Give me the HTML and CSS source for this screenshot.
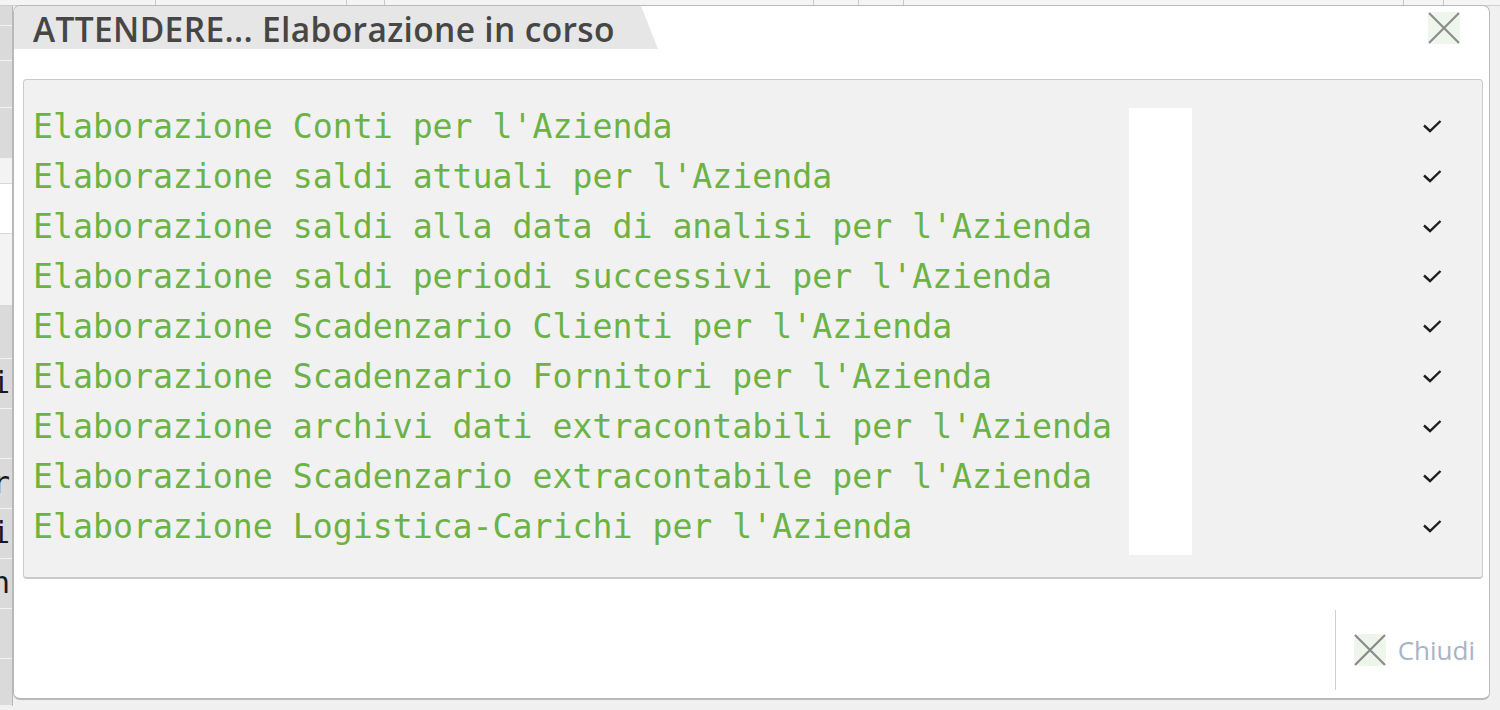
FILE: index.html
```html
<!DOCTYPE html>
<html lang="it">
<head>
<meta charset="utf-8">
<title>ATTENDERE... Elaborazione in corso</title>
<link rel="stylesheet" href="styles.css">
</head>
<body>
<div class="backdrop">
  <div class="topbar">
    <span class="tb tb1"></span><span class="tb tb2"></span><span class="tb tb3"></span><span class="tb tb4"></span><span class="tb tb5"></span><span class="tb tb6"></span><span class="tb tb7"></span><span class="tb tb8"></span>
  </div>
  <div class="leftcol">
    <div class="lr h20"></div>
    <div class="lr h35"></div>
    <div class="lr h47"></div>
    <div class="lr h51"></div>
    <div class="lr h25 light"></div>
    <div class="lr h50 white"></div>
    <div class="lr h72 light"></div>
    <div class="lr h53"></div>
    <div class="lr h50"><span>i</span></div>
    <div class="lr h50"></div>
    <div class="lr h50"><span>r</span></div>
    <div class="lr h50"><span>i</span></div>
    <div class="lr h50"><span>n</span></div>
    <div class="lr h50"></div>
    <div class="lr h47"></div>
  </div>
</div>

<div class="dialog">
  <div class="header">
    <div class="tab">ATTENDERE... Elaborazione in corso</div>
    <div class="close-top">
      <svg viewBox="0 0 32 32" width="32" height="32"><path d="M1 1 L31 31 M31 1 L1 31" stroke="#8c8c8c" stroke-width="2.2" fill="none"/></svg>
    </div>
  </div>

  <div class="panel">
    <div class="row"><span class="txt">Elaborazione Conti per l'Azienda</span><svg class="chk" viewBox="0 0 20 14"><path d="M2 6.5 L8 12 L18.5 2" /></svg></div>
    <div class="row"><span class="txt">Elaborazione saldi attuali per l'Azienda</span><svg class="chk" viewBox="0 0 20 14"><path d="M2 6.5 L8 12 L18.5 2" /></svg></div>
    <div class="row"><span class="txt">Elaborazione saldi alla data di analisi per l'Azienda</span><svg class="chk" viewBox="0 0 20 14"><path d="M2 6.5 L8 12 L18.5 2" /></svg></div>
    <div class="row"><span class="txt">Elaborazione saldi periodi successivi per l'Azienda</span><svg class="chk" viewBox="0 0 20 14"><path d="M2 6.5 L8 12 L18.5 2" /></svg></div>
    <div class="row"><span class="txt">Elaborazione Scadenzario Clienti per l'Azienda</span><svg class="chk" viewBox="0 0 20 14"><path d="M2 6.5 L8 12 L18.5 2" /></svg></div>
    <div class="row"><span class="txt">Elaborazione Scadenzario Fornitori per l'Azienda</span><svg class="chk" viewBox="0 0 20 14"><path d="M2 6.5 L8 12 L18.5 2" /></svg></div>
    <div class="row"><span class="txt">Elaborazione archivi dati extracontabili per l'Azienda</span><svg class="chk" viewBox="0 0 20 14"><path d="M2 6.5 L8 12 L18.5 2" /></svg></div>
    <div class="row"><span class="txt">Elaborazione Scadenzario extracontabile per l'Azienda</span><svg class="chk" viewBox="0 0 20 14"><path d="M2 6.5 L8 12 L18.5 2" /></svg></div>
    <div class="row"><span class="txt">Elaborazione Logistica-Carichi per l'Azienda</span><svg class="chk" viewBox="0 0 20 14"><path d="M2 6.5 L8 12 L18.5 2" /></svg></div>
    <div class="blank"></div>
  </div>

  <div class="footer">
    <div class="sep"></div>
    <div class="btn">
      <span class="btn-ico"><svg viewBox="0 0 32 32" width="32" height="32"><path d="M1 1 L31 31 M31 1 L1 31" stroke="#8a8a8a" stroke-width="2.2" fill="none"/></svg></span>
      <span class="btn-txt">Chiudi</span>
    </div>
  </div>
</div>
</body>
</html>
```

FILE: styles.css
```css
html, body {
  margin: 0;
  padding: 0;
}
body {
  width: 1500px;
  height: 710px;
  background: #f0f0f0;
  overflow: hidden;
  position: relative;
  font-family: "Open Sans", "Liberation Sans", sans-serif;
}

/* backdrop (application behind the dialog) */
.backdrop {
  position: absolute;
  inset: 0;
}
.topbar {
  height: 5px;
  background: #f4f4f4;
  border-bottom: 1px solid #cfcfcf;
  position: relative;
}
.tb {
  position: absolute;
  top: 0;
  width: 1px;
  height: 5px;
  background: #c8c8c8;
}
.tb1 { left: 155px; }
.tb2 { left: 346px; }
.tb3 { left: 384px; }
.tb4 { left: 813px; }
.tb5 { left: 858px; }
.tb6 { left: 903px; }
.tb7 { left: 1403px; }
.tb8 { left: 1443px; }

.leftcol {
  width: 12px;
  border-right: 1px solid #b8b8b8;
  display: flex;
  flex-direction: column;
  overflow: hidden;
}
.lr {
  background: #dadada;
  border-bottom: 1px solid #f2f2f2;
  box-sizing: border-box;
  font-family: "DejaVu Sans Mono", monospace;
  font-size: 30px;
  line-height: 48px;
  color: #1a1a1a;
  overflow: hidden;
  text-indent: -8px;
}
.lr.light { background: #f3f3f3; border-bottom-color: #d8d8d8; }
.lr.white { background: #ffffff; border-bottom-color: #d8d8d8; }
.h20 { height: 20px; }
.h25 { height: 25px; }
.h35 { height: 35px; }
.h47 { height: 47px; }
.h50 { height: 50px; }
.h51 { height: 51px; }
.h53 { height: 53px; }
.h72 { height: 72px; }

/* dialog window */
.dialog {
  position: absolute;
  left: 13px;
  top: 5px;
  width: 1477px;
  height: 695px;
  box-sizing: border-box;
  background: #ffffff;
  border: 1px solid #b9b9b9;
  border-bottom-width: 2px;
  border-radius: 7px;
  overflow: hidden;
  display: flex;
  flex-direction: column;
}

.header {
  height: 43px;
  display: flex;
  align-items: flex-start;
}
.tab {
  width: 644px;
  height: 43px;
  box-sizing: border-box;
  background: #e6e6e6;
  clip-path: polygon(0 0, 627px 0, 644px 100%, 0 100%);
  padding-left: 19px;
  font-size: 33.5px;
  font-weight: 600;
  color: #464646;
  line-height: 46px;
  letter-spacing: 0.35px;
  white-space: nowrap;
}
.close-top {
  margin-left: auto;
  margin-right: 29px;
  margin-top: 6px;
  width: 32px;
  height: 32px;
  background: #eef5eb;
  border-radius: 4px;
}
.close-top svg, .btn-ico svg { display: block; }

.panel {
  position: relative;
  margin: 30px 6px 0 9px;
  height: 500px;
  box-sizing: border-box;
  background: #f1f1f1;
  border: 1px solid #cacaca;
  border-bottom-width: 2px;
  border-radius: 4px;
  padding: 21px 40px 0 9px;
}
.row {
  height: 50px;
  display: flex;
  align-items: center;
  justify-content: space-between;
}
.txt {
  position: relative;
  z-index: 1;
  font-family: "DejaVu Sans Mono", "Liberation Mono", monospace;
  font-size: 33.2px;
  color: #6db246;
  white-space: pre;
}
.chk {
  width: 20px;
  height: 14px;
  fill: none;
  stroke: #1e1e1e;
  stroke-width: 2.4;
}
.blank {
  position: absolute;
  left: 1105px;
  top: 28px;
  width: 63px;
  height: 447px;
  background: #ffffff;
}

.footer {
  flex: 1;
  display: flex;
  justify-content: flex-end;
  align-items: flex-start;
  padding-top: 31px;
}
.sep {
  width: 1px;
  height: 80px;
  background: #cdcdcd;
}
.btn {
  height: 80px;
  display: flex;
  align-items: center;
  padding: 0 14px 0 18px;
  gap: 12px;
}
.btn-ico {
  width: 32px;
  height: 32px;
  background: #eef5eb;
  border-radius: 8px;
}
.btn-txt {
  font-size: 26px;
  color: #a9b3c6;
  line-height: 32px;
}
```
